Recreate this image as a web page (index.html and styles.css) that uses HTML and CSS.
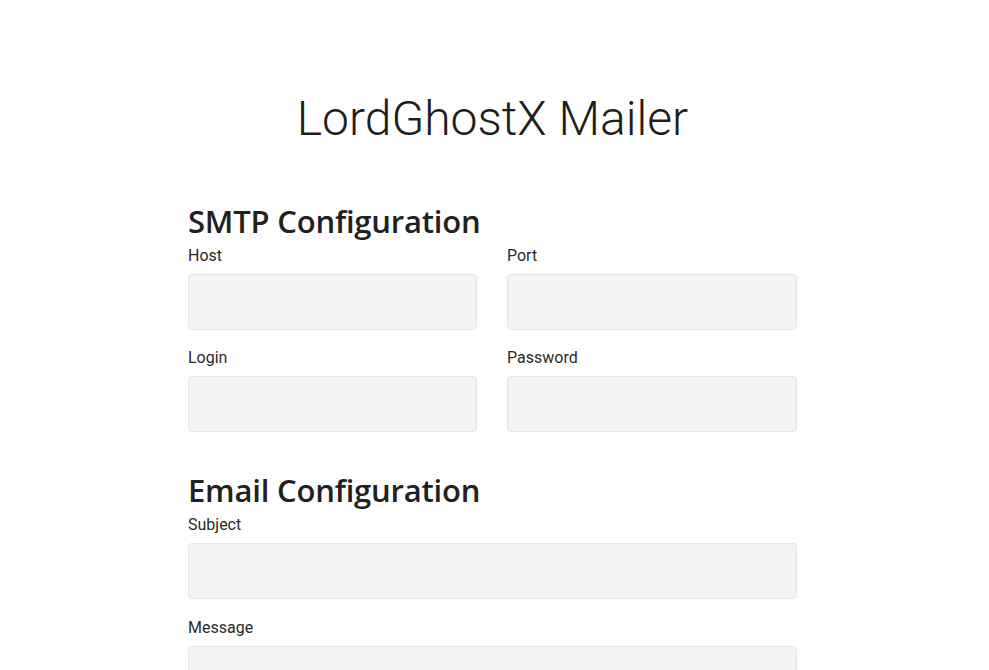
FILE: index.html
```html
<!DOCTYPE html>
<html>
<head>
<meta charset="utf-8">
<title>LordGhostX Mailer</title>
<link rel="stylesheet" href="styles.css">
</head>
<body>
<main class="page">
  <h1 class="title">LordGhostX Mailer</h1>
  <form class="form">
    <h2 class="section-title">SMTP Configuration</h2>
    <div class="grid">
      <div class="field">
        <label class="label">Host</label>
        <input class="input" type="text">
      </div>
      <div class="field">
        <label class="label">Port</label>
        <input class="input" type="text">
      </div>
      <div class="field">
        <label class="label">Login</label>
        <input class="input" type="text">
      </div>
      <div class="field">
        <label class="label">Password</label>
        <input class="input" type="password">
      </div>
    </div>
    <h2 class="section-title section-gap">Email Configuration</h2>
    <div class="stack">
      <div class="field">
        <label class="label">Subject</label>
        <input class="input" type="text">
      </div>
      <div class="field">
        <label class="label">Message</label>
        <textarea class="input textarea"></textarea>
      </div>
    </div>
  </form>
</main>
</body>
</html>
```
FILE: styles.css
```css
html, body {
  margin: 0;
  padding: 0;
  background: #ffffff;
  color: #212121;
}
.page {
  width: 609px;
  margin: 0 auto;
  padding: 0 4px 40px 0;
  font-family: Roboto, "Liberation Sans", sans-serif;
}
.title {
  margin: 0;
  padding-top: 90px;
  font-family: Roboto, sans-serif;
  font-weight: 300;
  font-size: 48px;
  line-height: 58px;
  text-align: center;
  color: #1e1e1e;
  letter-spacing: 0;
}
.form {
  margin-top: 55px;
}
.section-title {
  margin: 0;
  font-family: "Open Sans", "Noto Sans", sans-serif;
  font-weight: 600;
  font-size: 31px;
  line-height: 36px;
  color: #212121;
  letter-spacing: -0.2px;
}
.section-gap {
  margin-top: 40px;
}
.grid {
  display: grid;
  grid-template-columns: 289px 290px;
  column-gap: 30px;
  row-gap: 11px;
}
.stack {
  display: flex;
  flex-direction: column;
  gap: 12px;
}
.field {
  display: flex;
  flex-direction: column;
}
.label {
  font-size: 16px;
  line-height: 20px;
  margin-top: 7px;
  margin-bottom: 8px;
  color: #2a2a2a;
}
.input {
  box-sizing: border-box;
  height: 56px;
  width: 100%;
  background: #f4f4f4;
  border: 1px solid #e6e6e6;
  border-radius: 4px;
  font: inherit;
  padding: 8px 12px;
  margin: 0;
}
.textarea {
  height: 140px;
  resize: none;
}
```
